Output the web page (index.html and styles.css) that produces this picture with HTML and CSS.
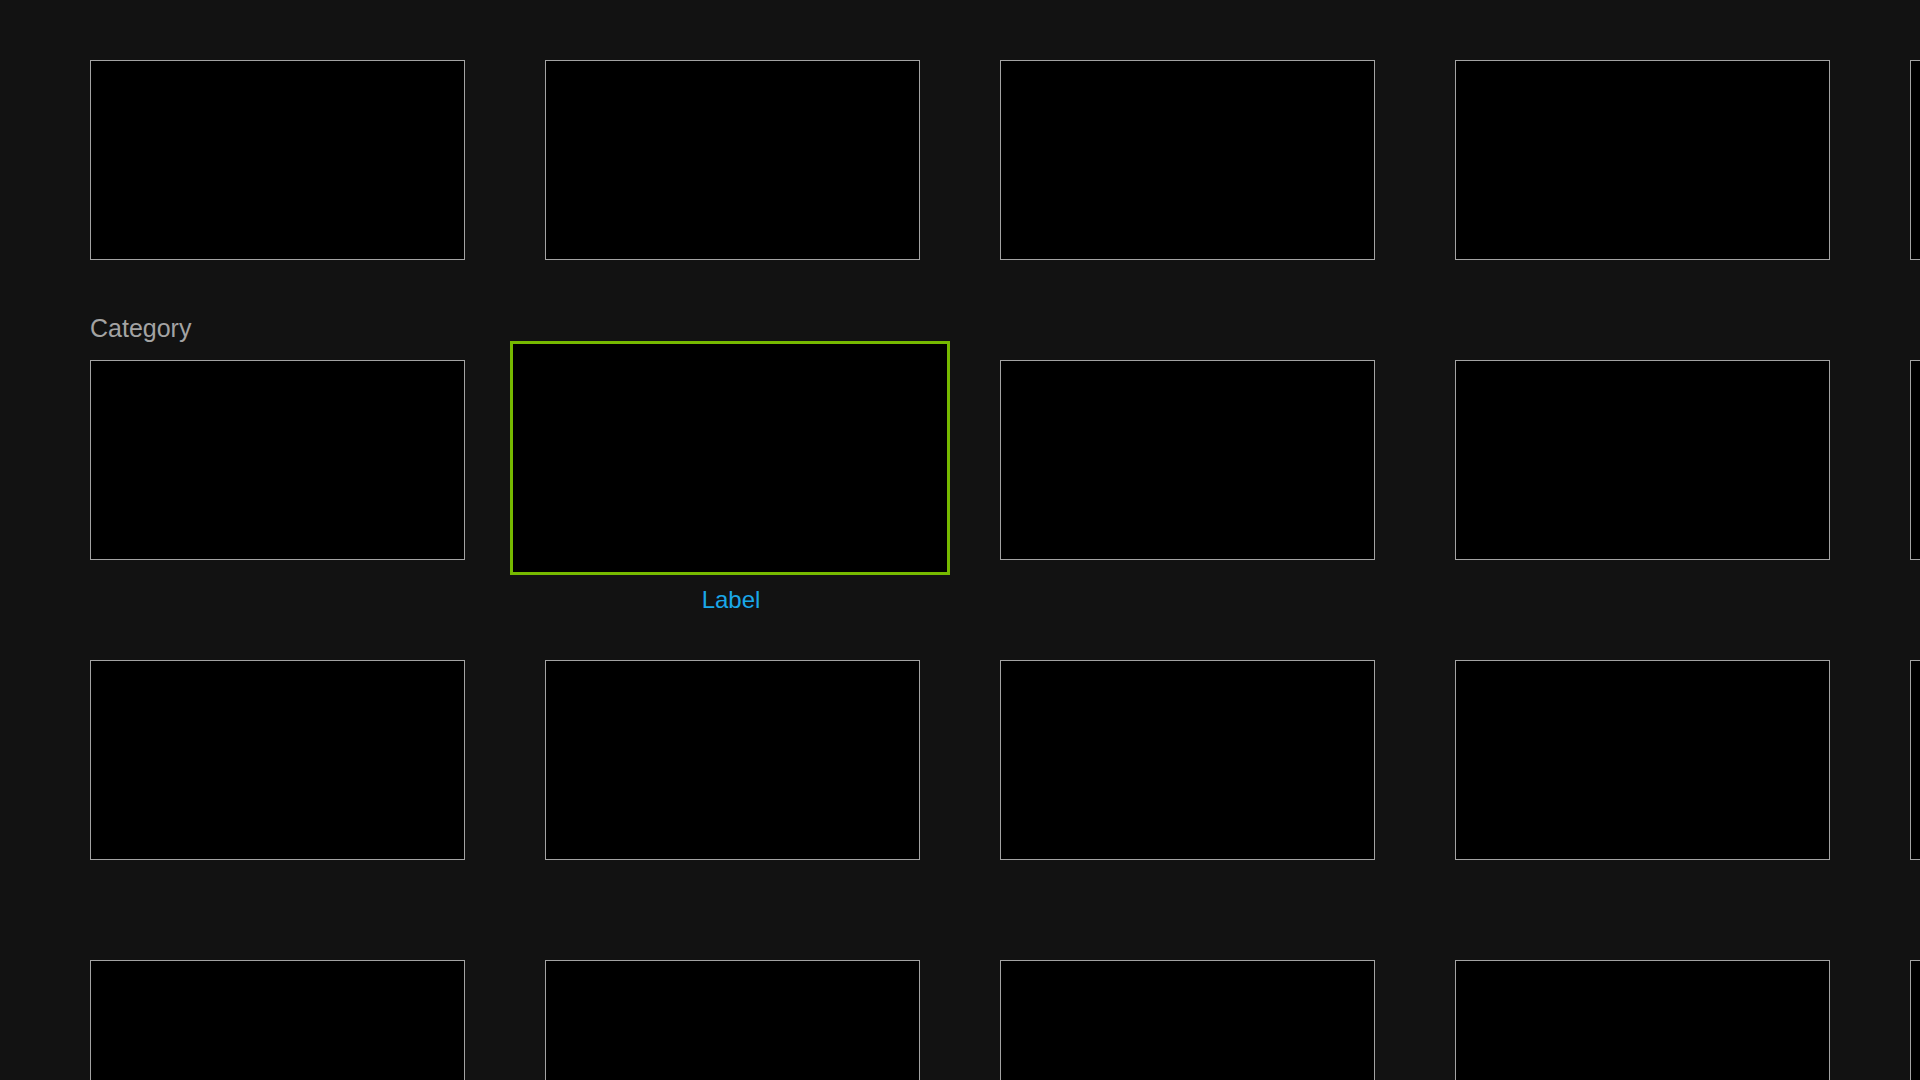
FILE: index.html
```html
<!DOCTYPE html>
<html lang="en">
<head>
<meta charset="utf-8">
<title>Grid</title>
<link rel="stylesheet" href="styles.css">
</head>
<body>
<main class="page">
  <section class="section">
    <div class="head head-first"></div>
    <div class="row">
      <div class="card"></div><div class="card"></div><div class="card"></div><div class="card"></div><div class="card"></div>
    </div>
  </section>
  <section class="section">
    <div class="head"><h2 class="title">Category</h2></div>
    <div class="row row-focus">
      <div class="card"></div>
      <div class="card card-focused">
        <div class="focus-ring"></div>
        <div class="focus-label">Label</div>
      </div>
      <div class="card"></div><div class="card"></div><div class="card"></div>
    </div>
  </section>
  <section class="section">
    <div class="head"></div>
    <div class="row">
      <div class="card"></div><div class="card"></div><div class="card"></div><div class="card"></div><div class="card"></div>
    </div>
  </section>
  <section class="section">
    <div class="head"></div>
    <div class="row">
      <div class="card"></div><div class="card"></div><div class="card"></div><div class="card"></div><div class="card"></div>
    </div>
  </section>
</main>
</body>
</html>
```
FILE: styles.css
```css
html, body {
  margin: 0;
  padding: 0;
  width: 1920px;
  height: 1080px;
  overflow: hidden;
  background: #121212;
  font-family: "Liberation Sans", Arial, sans-serif;
}
.page {
  display: flex;
  flex-direction: column;
  width: 1920px;
  height: 1080px;
  overflow: hidden;
}
.section {
  display: flex;
  flex-direction: column;
  flex: 0 0 auto;
}
.head {
  height: 100px;
  box-sizing: border-box;
  padding-left: 90px;
  padding-bottom: 17px;
  display: flex;
  align-items: flex-end;
}
.head-first {
  height: 60px;
}
.title {
  margin: 0;
  font-size: 25px;
  line-height: 30px;
  font-weight: normal;
  color: #a3a3a3;
}
.row {
  display: flex;
  gap: 80px;
  padding-left: 90px;
}
.card {
  flex: 0 0 auto;
  width: 375px;
  height: 200px;
  box-sizing: border-box;
  border: 1px solid #a3a3a3;
  background: #000;
}
.card-focused {
  position: relative;
  border-color: transparent;
  background: transparent;
}
.focus-ring {
  position: absolute;
  left: -36px;
  top: -20px;
  width: 440px;
  height: 234px;
  box-sizing: border-box;
  border: 3px solid #76b900;
  background: #000;
}
.focus-label {
  position: absolute;
  left: -35px;
  width: 440px;
  top: 225px;
  text-align: center;
  font-size: 24px;
  line-height: 28px;
  color: #1aa7e8;
}
```
